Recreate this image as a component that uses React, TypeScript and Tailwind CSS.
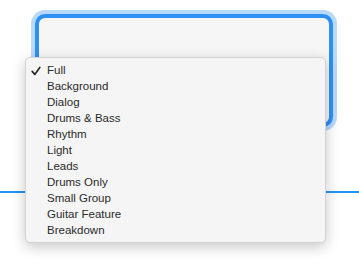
import React from 'react';

const options = [
  'Full',
  'Background',
  'Dialog',
  'Drums & Bass',
  'Rhythm',
  'Light',
  'Leads',
  'Drums Only',
  'Small Group',
  'Guitar Feature',
  'Breakdown',
];

const App: React.FC = () => {
  const selected = 'Full';

  return (
    <div className="relative w-[359px] h-[267px] bg-white overflow-hidden font-['Liberation_Sans',Arial,sans-serif]">
      {/* Focused text box */}
      <div className="ml-[35px] mt-[14px] w-[298px] h-[113px] rounded-[10px] border-4 border-[#2e90f2] bg-[#f6f6f6] shadow-[0_0_0_4px_#b9d9fb]" />

      {/* Timeline line */}
      <div className="mt-[64px] h-[2px] bg-[#2196f3]" />

      {/* Popup menu */}
      <div className="absolute left-[25px] top-[57px] w-[301px] rounded-[5px] bg-[#f5f5f5] border border-[#d2d2d2] pt-[5px] pb-[3px] shadow-[0_4px_14px_rgba(0,0,0,0.22)]">
        {options.map((opt) => (
          <div key={opt} className="flex items-center h-[16px] text-[11.5px] text-[#2a2a2a]">
            <span className="w-[21px] flex justify-start pl-[5px]">
              {opt === selected && (
                <svg width="10" height="10" viewBox="0 0 10 10">
                  <path d="M1.2 5.4 L3.8 8.4 L8.8 1.4" fill="none" stroke="#2a2a2a" strokeWidth="1.7" strokeLinecap="round" strokeLinejoin="round" />
                </svg>
              )}
            </span>
            <span>{opt}</span>
          </div>
        ))}
      </div>
    </div>
  );
};

export default App;
